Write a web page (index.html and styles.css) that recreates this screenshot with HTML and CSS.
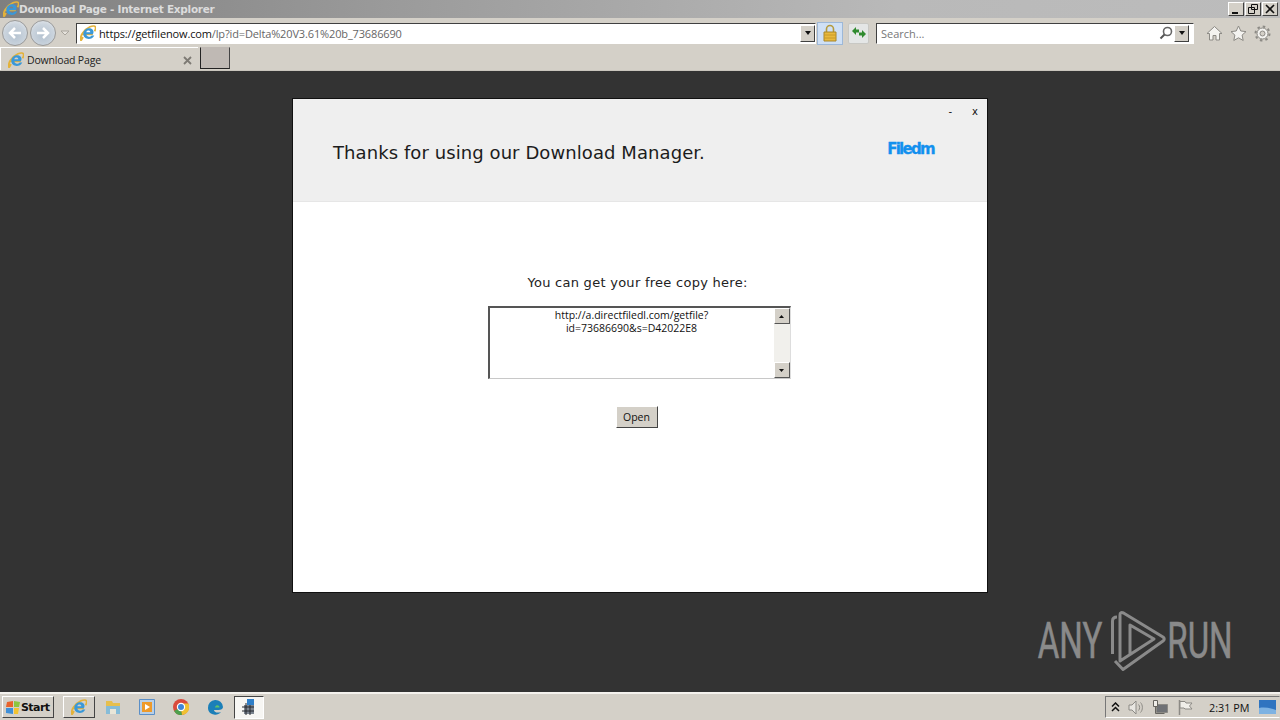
FILE: index.html
```html
<!DOCTYPE html>
<html lang="en">
<head>
<meta charset="utf-8">
<title>Download Page - Internet Explorer</title>
<link rel="stylesheet" href="styles.css">
</head>
<body>
<svg class="defs" width="0" height="0" aria-hidden="true">
  <defs>
    <symbol id="ie" viewBox="0 0 16 16">
      <path d="M2.500 9.300H12.800M3 12c-1 2-1.500 3-2 3.500C-.5 12 3 5 10 1.800c3-1.300 5.300-1 5.600.7.200 1-.3 2.500-1.100 3.700" fill="none" stroke="#e3b23a" stroke-width="1.700"/>
      <path d="M12.800 9.300H6.300c.2 2.500 3.500 3.300 5.500 1.100h2.500C12 15.700 3.300 15 3.300 8.800 3.300 4.500 8 2.500 11 3.500c2.500 1 3.300 3.600 1.800 5.800zM6.300 7.300h4c0-2.500-3.700-2.500-4 0z" fill="#3a98d8"/>
    </symbol>
    <symbol id="arrow" viewBox="0 0 10 10">
      <path d="M2 3h6L5 7z" fill="#111"/>
    </symbol>
  </defs>
</svg>

<header class="titlebar">
  <svg class="ico16"><use href="#ie"/></svg>
  <span class="title-text">Download Page - Internet Explorer</span>
  <div class="win-btns">
    <span class="win-btn"><svg width="12" height="12" viewBox="0 0 12 12"><path d="M2 9h6v2H2z" fill="#111"/></svg></span>
    <span class="win-btn"><svg width="12" height="12" viewBox="0 0 12 12"><path d="M4.500 1.500h6v5h-6zM1.500 4.500h6v6h-6z" fill="#d4d0c8" stroke="#111"/></svg></span>
    <span class="win-btn"><svg width="12" height="12" viewBox="0 0 12 12"><path d="M2 2l8 8M10 2l-8 8" stroke="#111" stroke-width="1.600"/></svg></span>
  </div>
</header>

<nav class="toolbar">
  <div class="nav-arrows">
    <span class="round-btn"><svg width="14" height="12" viewBox="0 0 14 12"><path d="M7 1L2 6l5 5M2 6h11" fill="none" stroke="#fff" stroke-width="2.500"/></svg></span>
    <span class="round-btn"><svg width="14" height="12" viewBox="0 0 14 12"><path d="M7 1l5 5-5 5M12 6H1" fill="none" stroke="#fff" stroke-width="2.500"/></svg></span>
    <svg class="nav-drop" width="10" height="6" viewBox="0 0 10 6"><path d="M1 1h8L5 5z" fill="#e6e3dd" stroke="#a9a59d"/></svg>
  </div>
  <div class="address">
    <svg class="ico16"><use href="#ie"/></svg>
    <span class="url"><span class="url-host">https://getfilenow.com</span>/lp?id=Delta%20V3.61%20b_73686690</span>
    <span class="drop-btn"><svg width="10" height="10"><use href="#arrow"/></svg></span>
  </div>
  <span class="lock-btn">
    <svg width="14" height="18" viewBox="0 0 14 18"><path d="M3.500 9V5a3.500 3.500 0 0 1 7 0v4" fill="none" stroke="#b59a3c" stroke-width="1.600"/><path d="M1 8h12v9H1z" fill="#e9b93c" stroke="#a8862a"/><path d="M1 11h12M1 14h12" stroke="#c89a28"/></svg>
  </span>
  <span class="refresh-btn">
    <svg width="16" height="14" viewBox="0 0 16 14"><path d="M1 5l4-4v2.500h3v3H5V9zM15 8l-4 4V9.500H8v-3h3V4z" fill="#2f8a2f"/></svg>
  </span>
  <div class="search">
    <span class="search-text">Search...</span>
    <svg class="search-ico" width="14" height="14" viewBox="0 0 14 14"><circle cx="8.500" cy="5.500" r="4" fill="none" stroke="#666" stroke-width="1.600"/><path d="M5.500 8.500L1.500 12.500" stroke="#555" stroke-width="2"/></svg>
    <span class="drop-btn"><svg width="10" height="10"><use href="#arrow"/></svg></span>
  </div>
  <div class="tools">
    <svg width="17" height="17" viewBox="0 0 17 17"><path d="M8.500 1.500L1 8.500h2.500V15h3.500v-4.500h3V15h3.500V8.500H16z" fill="#f4f3f0" stroke="#8c8a85"/></svg>
    <svg width="17" height="17" viewBox="0 0 17 17"><path d="M8.500 1l2.300 5 5.200.6-3.900 3.500 1.100 5.400-4.700-2.700-4.700 2.700 1.100-5.400L1 6.600 6.200 6z" fill="#f4f3f0" stroke="#8c8a85"/></svg>
    <svg width="17" height="17" viewBox="0 0 17 17"><circle cx="8.500" cy="8.500" r="5.500" fill="#f4f3f0" stroke="#8c8a85" stroke-width="1"/><circle cx="8.500" cy="8.500" r="7" fill="none" stroke="#8c8a85" stroke-width="2" stroke-dasharray="2.500 3"/><circle cx="8.500" cy="8.500" r="2.500" fill="#d4d0c8" stroke="#8c8a85"/></svg>
  </div>
</nav>

<div class="tabbar">
  <div class="tab">
    <svg class="ico16"><use href="#ie"/></svg>
    <span class="tab-text">Download Page</span>
    <svg class="tab-close" width="9" height="9" viewBox="0 0 9 9"><path d="M1 1l7 7M8 1L1 8" stroke="#7d7a74" stroke-width="1.800"/></svg>
  </div>
  <span class="new-tab"></span>
</div>

<main class="desktop">
  <section class="dialog">
    <div class="dialog-head">
      <h1 class="thanks">Thanks for using our Download Manager.</h1>
      <span class="logo">Filedm</span>
      <div class="dialog-ctrls"><span>-</span><span>x</span></div>
    </div>
    <div class="dialog-body">
      <p class="lead">You can get your free copy here:</p>
      <div class="linkbox">
        <div class="linkbox-text">http://a.directfiledl.com/getfile?<br>id=73686690&amp;s=D42022E8</div>
        <div class="scroll">
          <span class="scroll-btn"><svg width="7" height="7" viewBox="0 0 7 7"><path d="M3.500 2L6 5H1z" fill="#111"/></svg></span>
          <span class="scroll-btn"><svg width="7" height="7" viewBox="0 0 7 7"><path d="M3.500 5L1 2h5z" fill="#111"/></svg></span>
        </div>
      </div>
      <button class="open-btn" type="button">Open</button>
    </div>
  </section>
  <div class="watermark">
    <span class="wm-any">ANY</span>
    <svg class="wm-logo" width="56" height="61" viewBox="0 0 56 61"><path d="M2.500 43V10Q2.500 6 7 6" fill="none" stroke="#8a8a8a" stroke-width="3"/><path d="M5 50l8 8.500L53 30q2.500-2 0-4L13.500 2Q10 .5 10 4v46l34-22L20 14v30" fill="none" stroke="#8a8a8a" stroke-width="3" stroke-linejoin="round"/></svg>
    <span class="wm-run">RUN</span>
  </div>
</main>

<footer class="taskbar">
  <span class="start-btn">
    <svg width="16" height="15" viewBox="0 0 16 15"><path d="M2 2l6-1v6H1z" fill="#e8632c"/><path d="M9 1l6 1-1 5H9z" fill="#8cc63f"/><path d="M1 8h7v6l-7-1z" fill="#3f8fd8"/><path d="M9 8h5l-1 6-4-0z" fill="#f2c331"/></svg>
    <span>Start</span>
  </span>
  <span class="task-item task-ie"><svg class="ico16"><use href="#ie"/></svg></span>
  <span class="task-item">
    <svg width="16" height="16" viewBox="0 0 16 16"><path d="M1 2h6l1 2h7v4H1z" fill="#e6bf4e"/><path d="M1 7h14v8H1z" fill="#86bcd8"/><path d="M5 15v-5h6v5" fill="#e9e6d8"/></svg>
  </span>
  <span class="task-item">
    <svg width="16" height="16" viewBox="0 0 16 16"><path d="M.5.500h15v15H.5z" fill="#b9cfe6" stroke="#5b8fc7"/><path d="M3 3h10v10H3z" fill="#ee9a2a"/><path d="M6 5l5 3-5 3z" fill="#fff"/></svg>
  </span>
  <span class="task-item">
    <svg width="16" height="16" viewBox="0 0 16 16"><circle cx="8" cy="8" r="8" fill="#d94b3d"/><path d="M8 8L1 12a8 8 0 0 0 8 4z" fill="#4da04d"/><path d="M8 8l1 8a8 8 0 0 0 6.500-11.500H8z" fill="#f0c132"/><circle cx="8" cy="8" r="3.600" fill="#3f86d8" stroke="#fff" stroke-width="1.200"/></svg>
  </span>
  <span class="task-item">
    <svg width="16" height="16" viewBox="0 0 16 16"><path d="M1 9a7.500 7.500 0 0 1 15-1c0 2-2 3-4.500 3H7c0 2 3 3.500 7 2-2 2.500-5 3-7 2.500C3.500 15 1 12.500 1 9z" fill="#1b7fb8"/><path d="M8 8c1-2 3-2 4-1 .5.500.5 1 .5 1.500H8z" fill="#5ec26a"/></svg>
  </span>
  <span class="task-item task-active">
    <svg width="16" height="18" viewBox="0 0 16 18"><path d="M6 1h7v6H6z" fill="#2f7fc8"/><path d="M3 7h10v9H3z" fill="#7c8590"/><path d="M5 5v12M1 9h12M1 13h12M9 7v10" stroke="#26292e"/></svg>
  </span>
  <div class="tray">
    <svg width="9" height="10" viewBox="0 0 9 10"><path d="M1 4.500l3.500-3.500L8 4.500M1 9l3.500-3.500L8 9" fill="none" stroke="#111" stroke-width="1.500"/></svg>
    <svg width="16" height="15" viewBox="0 0 16 15"><path d="M1 5h3l4-4v13l-4-4H1z" fill="#e8e6e1" stroke="#8c8a85"/><path d="M10.500 4.500c1.500 1.500 1.500 4.500 0 6M12.500 2.500c2.500 2.500 2.500 7.500 0 10" fill="none" stroke="#8c8a85"/></svg>
    <svg width="17" height="16" viewBox="0 0 17 16"><path d="M4.500 5.500h11v8h-11z" fill="#6f7175" stroke="#8c8a85"/><path d="M1.500 1.500h4v6h-4z" fill="#f0eee9" stroke="#66645f"/><path d="M3.500 7.500v7h9" fill="none" stroke="#66645f"/></svg>
    <svg width="16" height="16" viewBox="0 0 16 16"><path d="M2.500 1v15" stroke="#8c8a85" stroke-width="1.500"/><path d="M3 2.500h5l1 1.500h6l-2.500 3 2.500 3H8l-1-1H3z" fill="#f0eee9" stroke="#8c8a85"/></svg>
    <span class="clock">2:31 PM</span>
    <svg class="show-desktop" width="17" height="14" viewBox="0 0 17 14"><path d="M0 0h17v14H0z" fill="#2f74c0"/><path d="M0 8c6-1 11 0 17 2v4H0z" fill="#7db2e2"/></svg>
  </div>
</footer>
</body>
</html>
```
FILE: styles.css
```css
* { box-sizing: border-box; }
html, body { margin: 0; padding: 0; }
body {
  width: 1280px;
  height: 720px;
  overflow: hidden;
  display: flex;
  flex-direction: column;
  font-family: "Open Sans", "Noto Sans", sans-serif;
  background: #333;
  color: #111;
}
.defs { position: absolute; }
.ico16 { width: 16px; height: 16px; flex: none; display: block; }

.titlebar {
  height: 18px;
  flex: none;
  display: flex;
  align-items: center;
  padding-left: 3px;
  background: linear-gradient(90deg, #7f7f7f 0%, #9a9a9a 30%, #b9b9b9 70%, #bcbcbc 100%);
}
.title-text {
  font: bold 10.500px "DejaVu Sans", sans-serif;
  letter-spacing: -0.28px;
  color: #dcdcdc;
}
.win-btns { margin-left: auto; margin-right: 2px; display: flex; gap: 1px; }
.win-btn {
  width: 16px;
  height: 14px;
  display: flex;
  align-items: center;
  justify-content: center;
  background: #d4d0c8;
  border: 1px solid;
  border-color: #fff #404040 #404040 #fff;
}

.toolbar {
  height: 29px;
  flex: none;
  display: flex;
  align-items: center;
  padding-top: 1px;
  background: #d4d0c8;
}
.nav-arrows { width: 76px; flex: none; display: flex; align-items: center; padding-left: 2px; gap: 2px; }
.round-btn {
  width: 26px;
  height: 26px;
  flex: none;
  border-radius: 50%;
  display: flex;
  align-items: center;
  justify-content: center;
  background: radial-gradient(circle at 50% 60%, #b4c2d0 0%, #ccd5de 60%, #eeeff0 100%);
  border: 1px solid #9a9a9a;
}
.nav-drop { margin-left: 2px; }
.address {
  width: 740px;
  flex: none;
  height: 21px;
  display: flex;
  align-items: center;
  padding-left: 3px;
  background: #fff;
  border: 1px solid;
  border-color: #404040 #fff #fff #404040;
}
.url { margin-left: 3px; font-size: 11px; color: #666; white-space: nowrap; letter-spacing: -0.14px; }
.url-host { color: #111; }
.drop-btn {
  width: 15px;
  height: 17px;
  flex: none;
  margin-left: auto;
  display: flex;
  align-items: center;
  justify-content: center;
  background: #d4d0c8;
  border: 1px solid;
  border-color: #fff #404040 #404040 #fff;
}
.lock-btn {
  width: 26px;
  height: 23px;
  flex: none;
  margin-left: 1px;
  display: flex;
  align-items: center;
  justify-content: center;
  background: #cfe0f5;
  border: 1px solid #9db8d8;
}
.refresh-btn {
  width: 21px;
  height: 21px;
  flex: none;
  margin-left: 5px;
  display: flex;
  align-items: center;
  justify-content: center;
  background: #e4e6e6;
  border: 1px solid #c8c8c4;
  border-radius: 2px;
}
.search {
  width: 318px;
  height: 21px;
  flex: none;
  margin-left: 7px;
  display: flex;
  align-items: center;
  padding-left: 4px;
  padding-right: 4px;
  background: #fff;
  border: 1px solid;
  border-color: #404040 #fff #fff #404040;
}
.search-text { font-size: 11px; color: #777; }
.search-ico { margin-left: auto; margin-right: 1px; }
.search .drop-btn { margin-left: 0; }
.tools { display: flex; gap: 7px; margin-left: 12px; }

.tabbar {
  height: 24px;
  flex: none;
  display: flex;
  align-items: flex-start;
  background: #d4d0c8;
  border-bottom: 1px solid #c9c5bd;
}
.tab {
  width: 198px;
  height: 23px;
  flex: none;
  display: flex;
  align-items: center;
  padding: 2px 0 0 7px;
  border-top: 1px solid #fff;
  border-left: 1px solid #fff;
}
.tab-text { margin-left: 3px; font-size: 10.500px; letter-spacing: -0.18px; color: #222; }
.tab-close { margin-left: auto; margin-right: 6px; }
.new-tab {
  width: 30px;
  height: 22px;
  flex: none;
  margin-left: 2px;
  background: #bfb9b4;
  border: 1px solid;
  border-color: transparent #444 #222 #222;
}

.desktop { flex: 1; position: relative; display: flex; justify-content: center; padding-top: 27px; background: #333; }
.dialog {
  width: 696px;
  height: 495px;
  flex: none;
  display: flex;
  flex-direction: column;
  background: #fff;
  border: 1px solid #111;
  font-family: "DejaVu Sans", sans-serif;
}
.dialog-head {
  height: 103px;
  flex: none;
  position: relative;
  display: flex;
  align-items: center;
  justify-content: space-between;
  padding: 5px 53px 0 40px;
  background: #efefef;
  border-bottom: 1px solid #e6e6e6;
}
.thanks { margin: 0; font-size: 18px; font-weight: 400; color: #1c1c1c; letter-spacing: 0.08px; }
.logo {
  margin-top: -7px;
  font: bold 15px "DejaVu Sans", sans-serif;
  letter-spacing: -1.7px;
  color: #1390ee;
  -webkit-text-stroke: 0.3px #1390ee;
}
.dialog-ctrls {
  position: absolute;
  top: 7px;
  right: 9px;
  display: flex;
  gap: 20px;
  font-size: 10px;
  color: #111;
}
.dialog-body { flex: 1; display: flex; flex-direction: column; align-items: center; }
.lead {
  margin: 72px 0 0 -5px;
  font-size: 13px;
  color: #222;
  letter-spacing: 0.27px;
  line-height: 17px;
}
.linkbox {
  width: 303px;
  height: 73px;
  margin: 15px 0 0 -2px;
  flex: none;
  display: flex;
  background: #fff;
  border: 1px solid;
  border-color: #555 #ddd #c8c8c8 #555;
  border-width: 2px 1px 1px 2px;
}
.linkbox-text {
  flex: 1;
  padding-top: 1px;
  text-align: center;
  font: 10.500px/13px "Open Sans", sans-serif;
  color: #111;
}
.scroll {
  width: 16px;
  flex: none;
  display: flex;
  flex-direction: column;
  justify-content: space-between;
  background: #f1f0ec;
}
.scroll-btn {
  width: 16px;
  height: 16px;
  display: flex;
  align-items: center;
  justify-content: center;
  background: #d4d0c8;
  border: 1px solid;
  border-color: #fff #555 #555 #fff;
}
.open-btn {
  width: 42px;
  height: 22px;
  margin: 27px 0 0 -7px;
  padding: 0;
  font: 10.500px "Open Sans", sans-serif;
  color: #111;
  background: #d4d0c8;
  border: 1px solid;
  border-color: #fff #444 #444 #fff;
}
.watermark {
  position: absolute;
  left: 1039px;
  top: 539px;
  display: flex;
  align-items: center;
  font: 400 50px/62px "Roboto", sans-serif;
  color: #8a8a8a;
}
.wm-any, .wm-run {
  width: 62px;
  display: flex;
  justify-content: center;
  transform: scaleX(0.66);
  -webkit-text-stroke: 0.6px #8a8a8a;
}
.wm-logo { margin: 0 3px 0 9px; }

.taskbar {
  height: 28px;
  flex: none;
  display: flex;
  align-items: center;
  padding-left: 2px;
  background: #d4d0c8;
  border-top: 2px solid #f4f2ee;
}
.start-btn {
  width: 52px;
  height: 22px;
  flex: none;
  display: flex;
  align-items: center;
  gap: 0;
  padding-left: 2px;
  font: bold 11px "DejaVu Sans", sans-serif;
  letter-spacing: -0.55px;
  color: #111;
  background: #d4d0c8;
  border: 1px solid;
  border-color: #fff #444 #444 #fff;
}
.task-item {
  width: 34px;
  height: 22px;
  flex: none;
  display: flex;
  align-items: center;
  justify-content: center;
}
.task-ie {
  width: 32px;
  margin-left: 9px;
  margin-right: 1px;
  border: 1px solid;
  border-color: #fff #444 #444 #fff;
}
.task-active {
  width: 30px;
  height: 23px;
  margin-left: 2px;
  background: #f7f6f3;
  border: 1px solid;
  border-color: #444 #fff #fff #444;
}
.tray {
  margin-left: auto;
  width: 175px;
  height: 22px;
  flex: none;
  display: flex;
  align-items: center;
  gap: 8px;
  padding-left: 5px;
  border: 1px solid;
  border-color: #777 transparent #fff #777;
}
.clock { margin-left: 8px; font-size: 10.800px; color: #111; white-space: nowrap; }
.show-desktop { margin-left: auto; margin-right: 3px; }
```
